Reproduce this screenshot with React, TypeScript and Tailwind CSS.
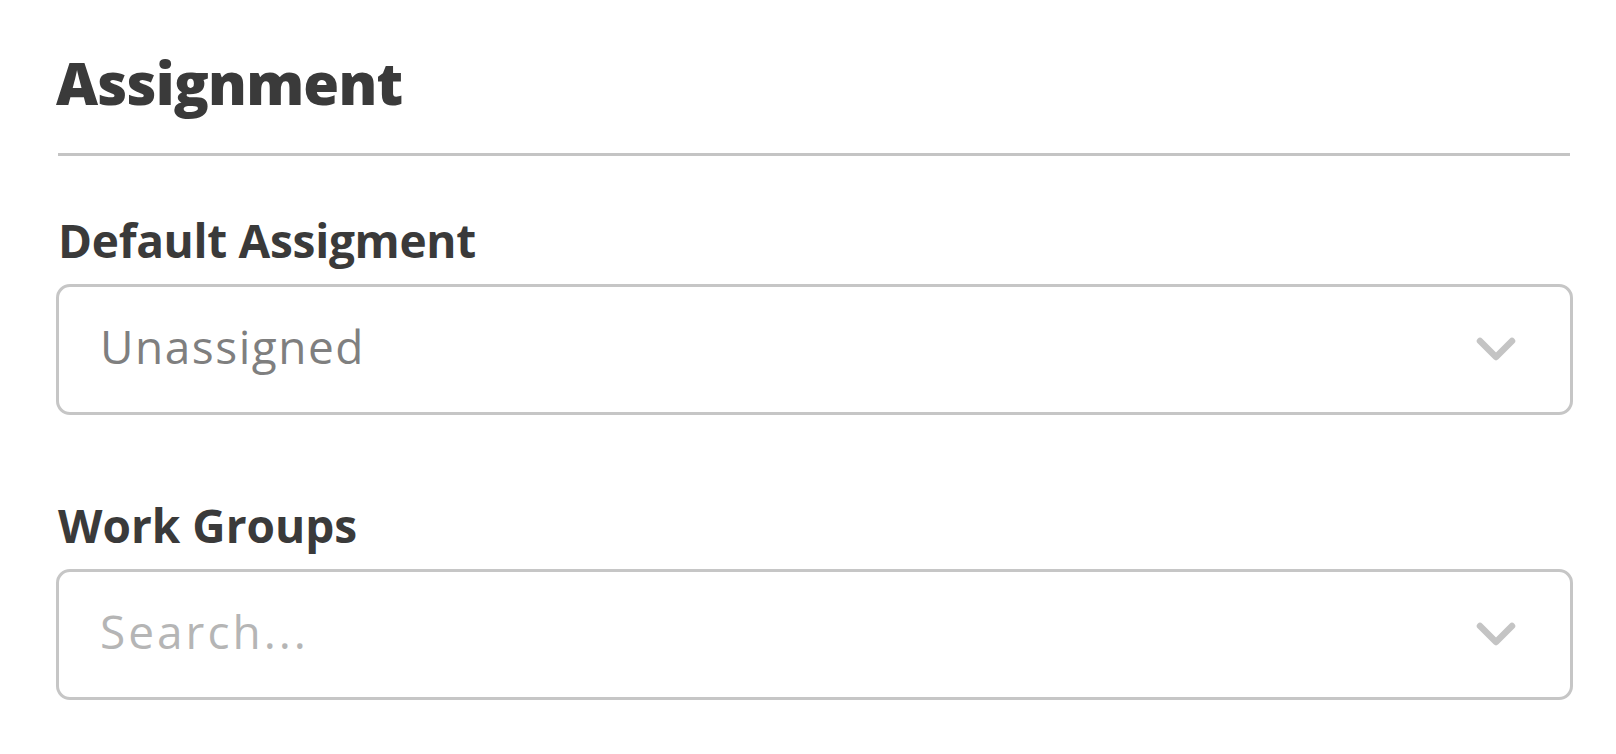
import { ChangeEvent, useState } from 'react';

function Chevron() {
  return (
    <svg width="40" height="24" viewBox="0 0 40 24" fill="none" className="shrink-0">
      <polyline
        points="4,4 20,20 36,4"
        stroke="#c4c4c4"
        strokeWidth="6.5"
        strokeLinecap="round"
        strokeLinejoin="round"
      />
    </svg>
  );
}

export default function App() {
  const [query, setQuery] = useState('');

  return (
    <div className="min-h-screen bg-white pl-[56px] pr-[43px] pt-[48px] font-['Open_Sans',sans-serif] text-[#3a3a3a]">
      <h1 className="text-[58px] leading-[1.2] font-extrabold tracking-[-0.8px]">Assignment</h1>
      <div className="mt-[35px] mr-[3px] ml-[2px] h-[3px] bg-[#c4c4c4]" />

      {/* Default assignment */}
      <div className="mt-[57px]">
        <label className="block pl-[2px] text-[46px] leading-[1.2] font-bold tracking-[-0.3px]">Default Assigment</label>
        <button className="mt-[16px] flex h-[131px] w-full items-center justify-between rounded-[14px] border-[3px] border-[#c6c6c6] pl-[41px] pr-[54px] text-left">
          <span className="pb-[6px] text-[46px] leading-[1.2] tracking-[1.5px] text-[#7f7f7f]">Unassigned</span>
          <Chevron />
        </button>
      </div>

      {/* Work groups */}
      <div className="mt-[83px]">
        <label className="block pl-[2px] text-[46px] leading-[1.2] font-bold">Work Groups</label>
        <div className="mt-[16px] flex h-[131px] w-full items-center justify-between rounded-[14px] border-[3px] border-[#c6c6c6] pl-[41px] pr-[54px]">
          <input
            value={query}
            onChange={(e: ChangeEvent<HTMLInputElement>) => setQuery(e.target.value)}
            placeholder="Search..."
            className="min-w-0 flex-1 bg-transparent pb-[6px] text-[46px] leading-[1.2] tracking-[3px] text-[#3a3a3a] outline-none placeholder:text-[#b5b5b5]"
          />
          <Chevron />
        </div>
      </div>
    </div>
  );
}
